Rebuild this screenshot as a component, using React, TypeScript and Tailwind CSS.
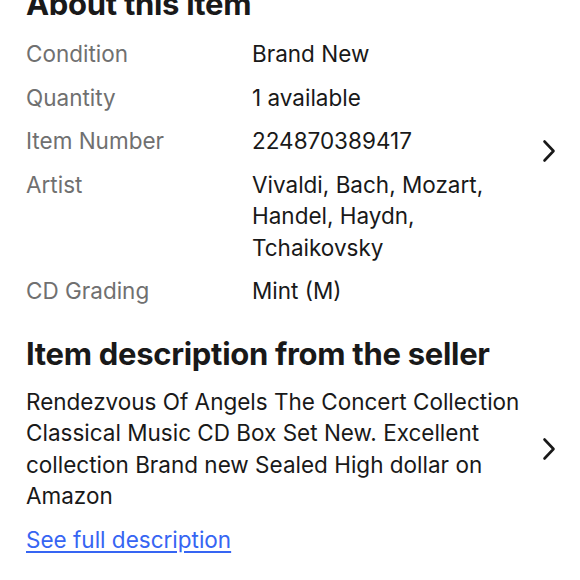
import React from "react";

const specs = [
  { label: "Condition", value: "Brand New" },
  { label: "Quantity", value: "1 available" },
  { label: "Item Number", value: "224870389417" },
  { label: "Artist", value: "Vivaldi, Bach, Mozart, Handel, Haydn, Tchaikovsky" },
  { label: "CD Grading", value: "Mint (M)" },
];

const Chevron = ({ className = "" }: { className?: string }) => (
  <svg width="16" height="24" viewBox="0 0 16 24" fill="none" className={"shrink-0 " + className}>
    <path d="M3.5 2.5 L12.5 12 L3.5 21.5" stroke="#191919" strokeWidth="2.6" strokeLinecap="round" strokeLinejoin="round" />
  </svg>
);

const App = () => {
  return (
    <div
      className="w-[580px] h-[580px] overflow-hidden bg-white text-[#191919]"
      style={{ fontFamily: "Inter, 'Noto Sans', sans-serif" }}
    >
      <div className="flex pl-[26px] pr-[23px] -mt-[15px]">
        <div className="flex-1">
          <h2 className="text-[31px] leading-[38px] font-bold tracking-[-0.3px]">About this item</h2>
          <div className="mt-[15px] grid grid-cols-[226px_1fr] gap-y-[12px] text-[22.5px] leading-[31.5px]">
            {specs.map((s) => (
              <React.Fragment key={s.label}>
                <div className="text-[#707070]">{s.label}</div>
                <div className="pr-[40px]">{s.value}</div>
              </React.Fragment>
            ))}
          </div>
        </div>
        <Chevron className="mt-[154px]" />
      </div>

      <div className="pl-[26px] pr-[23px] mt-[28px]">
        <h2 className="text-[31px] leading-[38px] font-bold tracking-[-0.3px]">Item description from the seller</h2>
        <div className="flex items-center mt-[13px]">
          <p className="flex-1 text-[22.5px] leading-[31.5px] pr-[8px]">
            Rendezvous Of Angels The Concert Collection Classical Music CD Box Set New. Excellent collection Brand new Sealed High dollar on Amazon
          </p>
          <Chevron />
        </div>
        <a href="#" className="inline-block mt-[12px] text-[22.5px] leading-[31.5px] text-[#3665f3] underline underline-offset-[3px]">
          See full description
        </a>
      </div>
    </div>
  );
};

export default App;
